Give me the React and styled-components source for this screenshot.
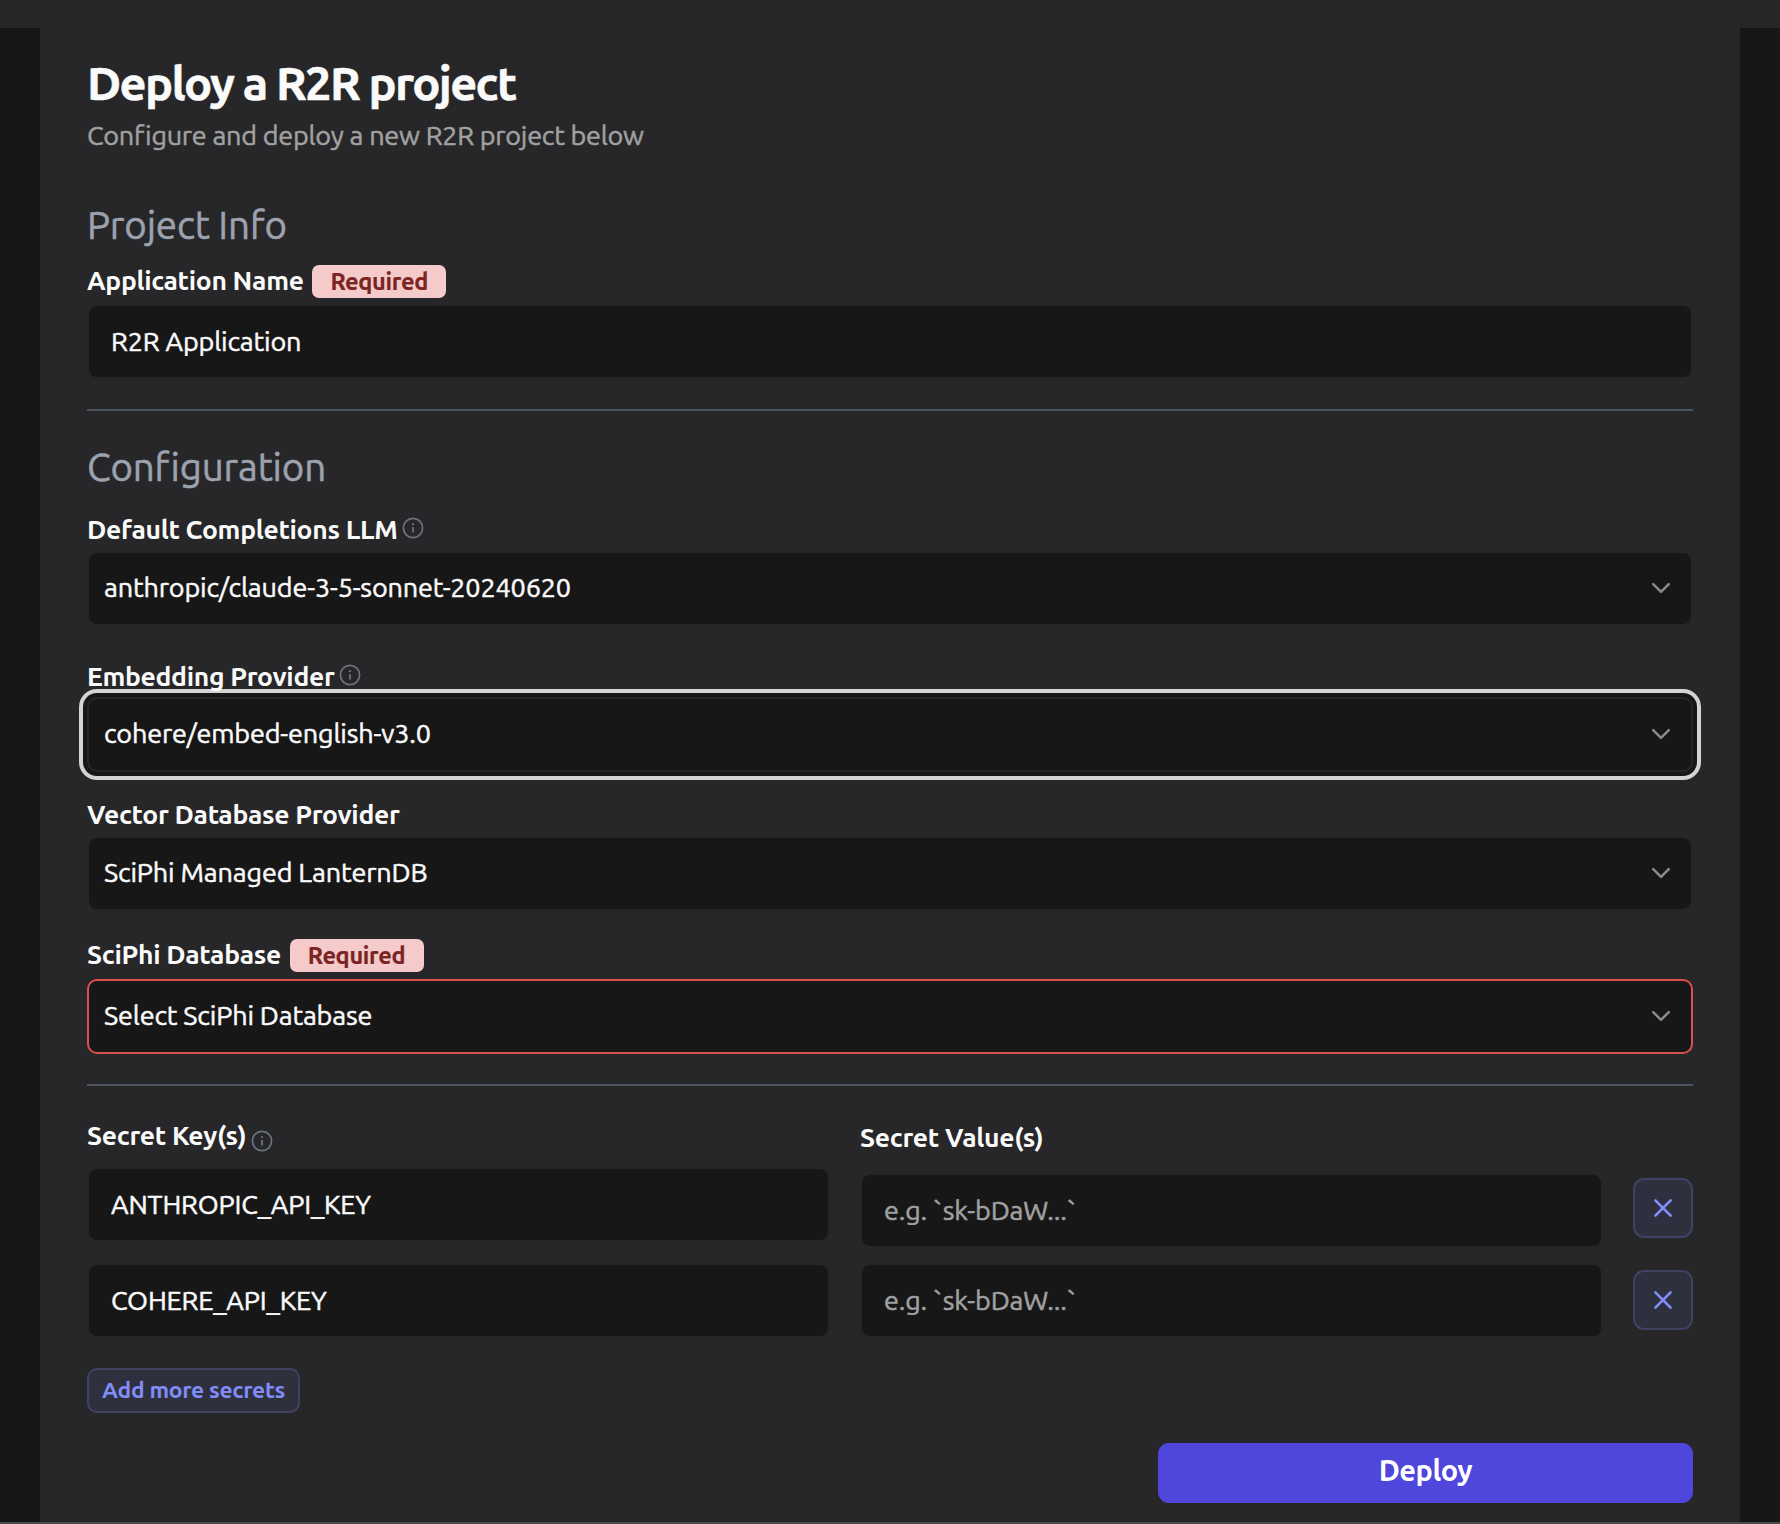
import React from 'react';
import styled, { createGlobalStyle, css } from 'styled-components';

const color = {
  page: '#171717',
  panel: '#272729',
  border: '#262627',
  text: '#fafafa',
  muted: '#a1a1a1',
  heading: '#9ca3af',
  rule: '#4b5563',
  icon: '#6b7280',
  chevron: '#8b8b8b',
  danger: '#dc4f4a',
  accent: '#818cf8',
  accentFill: '#2f303d',
  accentLine: '#404263',
  primary: '#4f46dc',
};

const GlobalStyle = createGlobalStyle`
  *, *::before, *::after { box-sizing: border-box; }
  body {
    margin: 0;
    background: ${color.page};
    color: ${color.text};
    font-family: Ubuntu, "Noto Sans", "Open Sans", sans-serif;
    font-size: 27px;
    font-weight: 400;
    letter-spacing: -0.15px;
    -webkit-text-stroke: 0.5px currentColor;
  }
  input, button {
    letter-spacing: inherit;
  }
`;

const Page = styled.div`
  height: 1524px;
  display: flex;
  flex-direction: column;
  overflow: hidden;
  border-bottom: 2px solid #4a4a4a;
`;

const TopBar = styled.header`
  flex: none;
  height: 28px;
  background: ${color.panel};
`;

const Card = styled.main`
  flex: 1;
  margin: 0 40px;
  padding: 27px 47px 0;
  background: ${color.panel};
`;

const Title = styled.h1`
  margin: 0;
  font-size: 47px;
  font-weight: 700;
  line-height: 56px;
  letter-spacing: -1.7px;
`;

const Subtitle = styled.p`
  margin: 6px 0 0;
  color: ${color.muted};
  line-height: 36px;
  letter-spacing: -0.24px;
`;

const SectionTitle = styled.h2`
  margin: ${(p) => p.$top}px 0 0;
  color: ${color.heading};
  font-size: 38.5px;
  font-weight: 400;
  line-height: 44px;
`;

const Rule = styled.hr`
  margin: 30px 0 0;
  border: 0;
  height: 2px;
  background: ${color.rule};
`;

const Field = styled.div`
  display: flex;
  flex-direction: column;
  gap: ${(p) => p.$gap}px;
  margin-top: ${(p) => p.$top || 0}px;
`;

const LabelRow = styled.div`
  position: relative;
  z-index: 1;
  display: flex;
  align-items: flex-start;
  height: 35px;
`;

const Label = styled.label`
  font-size: 26.5px;
  font-weight: 600;
  letter-spacing: -0.3px;
  line-height: 34px;
  white-space: nowrap;
  -webkit-text-stroke-width: 0;
`;

const Badge = styled.span`
  flex: none;
  width: 134px;
  height: 33px;
  margin: 2px 0 0 8.5px;
  border-radius: 7px;
  background: #f5caca;
  color: #7c2323;
  font-size: 23.5px;
  font-weight: 700;
  letter-spacing: -0.3px;
  line-height: 33px;
  text-align: center;
  -webkit-text-stroke-width: 0.2px;
`;

const InfoSvg = styled.svg`
  flex: none;
  width: 22px;
  height: 22px;
  margin: ${(p) => p.$drop}px 0 0 4.5px;
  color: ${color.icon};
`;

const box = css`
  height: 75px;
  border: 2px solid ${color.border};
  border-radius: 10px;
  background: ${color.page};
`;

const Input = styled.input`
  ${box}
  display: block;
  width: 100%;
  padding: 0 22px 2px;
  color: ${color.text};
  font: inherit;
  outline: none;
  &::placeholder {
    color: ${color.muted};
    opacity: 1;
  }
`;

const SelectBox = styled.button`
  ${box}
  display: flex;
  align-items: center;
  justify-content: space-between;
  width: 100%;
  padding: 0 19px 0 15px;
  color: ${color.text};
  font: inherit;
  ${(p) => p.$invalid && `border-color: ${color.danger};`}
  ${(p) => p.$focused && `box-shadow: 0 0 0 4px ${color.page}, 0 0 0 8px #d4d4d4;`}
`;

const SelectValue = styled.span`
  padding-bottom: 3px;
  white-space: nowrap;
`;

const ChevronSvg = styled.svg`
  width: 22px;
  height: 14px;
  margin-bottom: 1px;
  color: ${color.chevron};
`;

const SecretsGrid = styled.section`
  display: grid;
  grid-template-columns: 743px 743px 60px;
  gap: 30px;
  height: 252px;
  margin-top: 32px;
`;

const SecretColumn = styled.div`
  display: flex;
  flex-direction: column;
  padding-top: ${(p) => p.$top || 0}px;
`;

const Stack = styled.div`
  display: flex;
  flex-direction: column;
  gap: 32px;
`;

const accentButton = css`
  border: 2px solid ${color.accentLine};
  background: ${color.accentFill};
  color: ${color.accent};
`;

const RemoveButton = styled.button`
  ${accentButton}
  display: flex;
  align-items: center;
  justify-content: center;
  width: 60px;
  height: 60px;
  padding: 0;
  border-radius: 11px;
`;

const AddButton = styled.button`
  ${accentButton}
  display: block;
  width: 213px;
  height: 45px;
  margin-top: -2px;
  padding: 0 0 2px;
  border-radius: 10px;
  font: inherit;
  font-size: 22.8px;
  font-weight: 600;
  letter-spacing: -0.3px;
  white-space: nowrap;
  -webkit-text-stroke-width: 0;
`;

const Footer = styled.footer`
  display: flex;
  justify-content: flex-end;
  margin-top: 30px;
`;

const DeployButton = styled.button`
  width: 535px;
  height: 60px;
  padding: 0 0 7px;
  border: 0;
  border-radius: 11px;
  background: ${color.primary};
  color: #fff;
  font: inherit;
  font-size: 29px;
  font-weight: 600;
  letter-spacing: -0.5px;
  -webkit-text-stroke-width: 0;
`;

const Info = ({ drop = 5 }) => (
  <InfoSvg $drop={drop} viewBox="0 0 22 22" fill="none" stroke="currentColor">
    <circle cx="11" cy="11" r="9.6" strokeWidth="1.7" />
    <path d="M11 10v5.6" strokeWidth="1.8" />
    <path d="M11 6.2v1.9" strokeWidth="2" />
  </InfoSvg>
);

const Chevron = () => (
  <ChevronSvg
    viewBox="0 0 22 14"
    fill="none"
    stroke="currentColor"
    strokeWidth="2.5"
    strokeLinecap="round"
    strokeLinejoin="round"
  >
    <path d="M3.2 3.2l7.8 7.6 7.8-7.6" />
  </ChevronSvg>
);

const Cross = () => (
  <svg width="20" height="20" viewBox="0 0 20 20" fill="none" stroke="currentColor" strokeWidth="2.7" strokeLinecap="round">
    <path d="M2.4 2.4l15.2 15.2M17.6 2.4L2.4 17.6" />
  </svg>
);

const Select = ({ value, invalid, focused }) => (
  <SelectBox type="button" $invalid={invalid} $focused={focused}>
    <SelectValue>{value}</SelectValue>
    <Chevron />
  </SelectBox>
);

const secrets = ['ANTHROPIC_API_KEY', 'COHERE_API_KEY'];

export default function App() {
  return (
    <>
      <GlobalStyle />
      <Page>
        <TopBar />
        <Card>
          <Title>Deploy a R2R project</Title>
          <Subtitle>Configure and deploy a new R2R project below</Subtitle>

          <SectionTitle $top={50}>Project Info</SectionTitle>
          <Field $top={16} $gap={6}>
            <LabelRow>
              <Label>Application Name</Label>
              <Badge>Required</Badge>
            </LabelRow>
            <Input defaultValue="R2R Application" />
          </Field>

          <Rule />

          <SectionTitle $top={34}>Configuration</SectionTitle>
          <Field $top={23} $gap={4}>
            <LabelRow>
              <Label>Default Completions LLM</Label>
              <Info />
            </LabelRow>
            <Select value="anthropic/claude-3-5-sonnet-20240620" />
          </Field>
          <Field $top={33} $gap={3}>
            <LabelRow>
              <Label>Embedding Provider</Label>
              <Info />
            </LabelRow>
            <Select value="cohere/embed-english-v3.0" focused />
          </Field>
          <Field $top={25} $gap={4}>
            <LabelRow>
              <Label>Vector Database Provider</Label>
            </LabelRow>
            <Select value="SciPhi Managed LanternDB" />
          </Field>
          <Field $top={26} $gap={7}>
            <LabelRow>
              <Label>SciPhi Database</Label>
              <Badge>Required</Badge>
            </LabelRow>
            <Select value="Select SciPhi Database" invalid />
          </Field>

          <Rule />

          <SecretsGrid>
            <SecretColumn>
              <LabelRow>
                <Label>Secret Key(s)</Label>
                <Info drop={12} />
              </LabelRow>
              <Field $top={14} $gap={21}>
                {secrets.map((name) => (
                  <Input key={name} defaultValue={name} />
                ))}
              </Field>
            </SecretColumn>
            <SecretColumn $top={2}>
              <LabelRow>
                <Label>Secret Value(s)</Label>
              </LabelRow>
              <Field $top={18} $gap={15}>
                {secrets.map((name) => (
                  <Input key={name} placeholder="e.g. `sk-bDaW...`" />
                ))}
              </Field>
            </SecretColumn>
            <SecretColumn $top={60}>
              <Stack>
                {secrets.map((name) => (
                  <RemoveButton key={name} type="button">
                    <Cross />
                  </RemoveButton>
                ))}
              </Stack>
            </SecretColumn>
          </SecretsGrid>

          <AddButton type="button">Add more secrets</AddButton>
          <Footer>
            <DeployButton type="button">Deploy</DeployButton>
          </Footer>
        </Card>
      </Page>
    </>
  );
}
